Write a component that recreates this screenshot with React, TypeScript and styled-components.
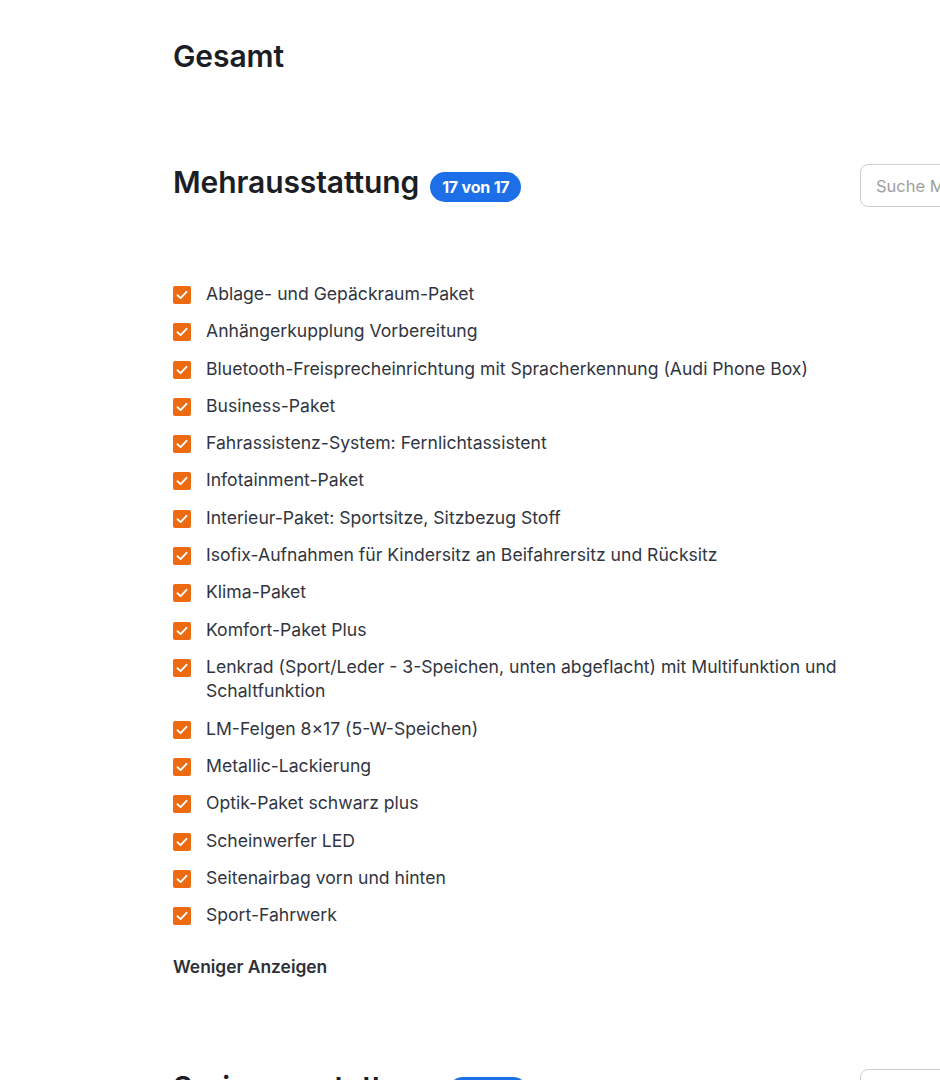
import React from "react";
import styled, { createGlobalStyle } from "styled-components";

const GlobalStyle = createGlobalStyle`
  html, body {
    margin: 0;
    padding: 0;
    overflow: hidden;
    background: #ffffff;
  }
  body {
    font-family: Inter, "Noto Sans", "Liberation Sans", sans-serif;
    color: #31353f;
    -webkit-font-smoothing: antialiased;
  }
  * { box-sizing: border-box; }
`;

const Page = styled.main`
  width: 1120px;
  padding: 38px 0 0 173px;
  display: flex;
  flex-direction: column;
  gap: 90px;
`;

const Section = styled.section`
  display: flex;
  flex-direction: column;
`;

const SectionHeader = styled.header`
  display: flex;
  align-items: flex-start;
  justify-content: space-between;
`;

const TitleGroup = styled.div`
  display: flex;
  align-items: baseline;
  gap: 11px;
`;

const Title = styled.h2`
  margin: 0;
  font-size: 30px;
  line-height: 36px;
  font-weight: 600;
  color: #1b1e24;
  letter-spacing: -0.1px;
`;

const Badge = styled.span`
  display: inline-block;
  background: #1c6fe6;
  color: #ffffff;
  font-size: 16px;
  line-height: 20px;
  font-weight: 700;
  padding: 5px 12px;
  border-radius: 15px;
  letter-spacing: -0.2px;
`;

const SearchInput = styled.input`
  width: 260px;
  height: 43px;
  border: 1px solid #cfcfcf;
  border-radius: 8px;
  padding: 0 15px;
  font-family: Inter, "Noto Sans", "Liberation Sans", sans-serif;
  font-size: 16.5px;
  color: #333;
  background: #fff;
  outline: none;
  &::placeholder {
    color: #a0a0a0;
  }
`;

const List = styled.ul`
  list-style: none;
  margin: 75px 0 0 0;
  padding: 0;
  width: 700px;
  display: flex;
  flex-direction: column;
  gap: 12.8px;
`;

const Item = styled.li`
  display: flex;
  align-items: flex-start;
  gap: 15px;
  font-size: 17.6px;
  line-height: 24.5px;
  color: #31353f;
`;

const Box = styled.span`
  flex: 0 0 18px;
  width: 18px;
  height: 18px;
  margin-top: 4px;
  border-radius: 2px;
  background: #ec6a10;
  display: flex;
  align-items: center;
  justify-content: center;
`;

const ToggleLink = styled.button`
  align-self: flex-start;
  margin-top: 27px;
  padding: 0;
  border: none;
  background: none;
  font-family: Inter, "Noto Sans", "Liberation Sans", sans-serif;
  font-size: 17.4px;
  line-height: 24px;
  font-weight: 600;
  color: #2d3038;
  cursor: pointer;
`;

const Check = () => (
  <svg width="12" height="10" viewBox="0 0 12 10" fill="none">
    <path
      d="M1.5 5.2 L4.6 8.1 L10.5 1.8"
      stroke="#ffffff"
      strokeWidth="1.9"
      strokeLinecap="round"
      strokeLinejoin="round"
    />
  </svg>
);

const items = [
  "Ablage- und Gepäckraum-Paket",
  "Anhängerkupplung Vorbereitung",
  "Bluetooth-Freisprecheinrichtung mit Spracherkennung (Audi Phone Box)",
  "Business-Paket",
  "Fahrassistenz-System: Fernlichtassistent",
  "Infotainment-Paket",
  "Interieur-Paket: Sportsitze, Sitzbezug Stoff",
  "Isofix-Aufnahmen für Kindersitz an Beifahrersitz und Rücksitz",
  "Klima-Paket",
  "Komfort-Paket Plus",
  "Lenkrad (Sport/Leder - 3-Speichen, unten abgeflacht) mit Multifunktion und Schaltfunktion",
  "LM-Felgen 8×17 (5-W-Speichen)",
  "Metallic-Lackierung",
  "Optik-Paket schwarz plus",
  "Scheinwerfer LED",
  "Seitenairbag vorn und hinten",
  "Sport-Fahrwerk",
];

export default function App() {
  return (
    <>
      <GlobalStyle />
      <Page>
        <Section>
          <Title>Gesamt</Title>
        </Section>

        <Section>
          <SectionHeader>
            <TitleGroup>
              <Title>Mehrausstattung</Title>
              <Badge>17 von 17</Badge>
            </TitleGroup>
            <SearchInput placeholder="Suche Mehrausstattung" />
          </SectionHeader>
          <List>
            {items.map((label) => (
              <Item key={label}>
                <Box>
                  <Check />
                </Box>
                <span>{label}</span>
              </Item>
            ))}
          </List>
          <ToggleLink>Weniger Anzeigen</ToggleLink>
        </Section>

        <Section>
          <SectionHeader>
            <TitleGroup>
              <Title>Serienausstattung</Title>
              <Badge>9 von 9</Badge>
            </TitleGroup>
            <SearchInput placeholder="Suche Serienausstattung" />
          </SectionHeader>
        </Section>
      </Page>
    </>
  );
}
